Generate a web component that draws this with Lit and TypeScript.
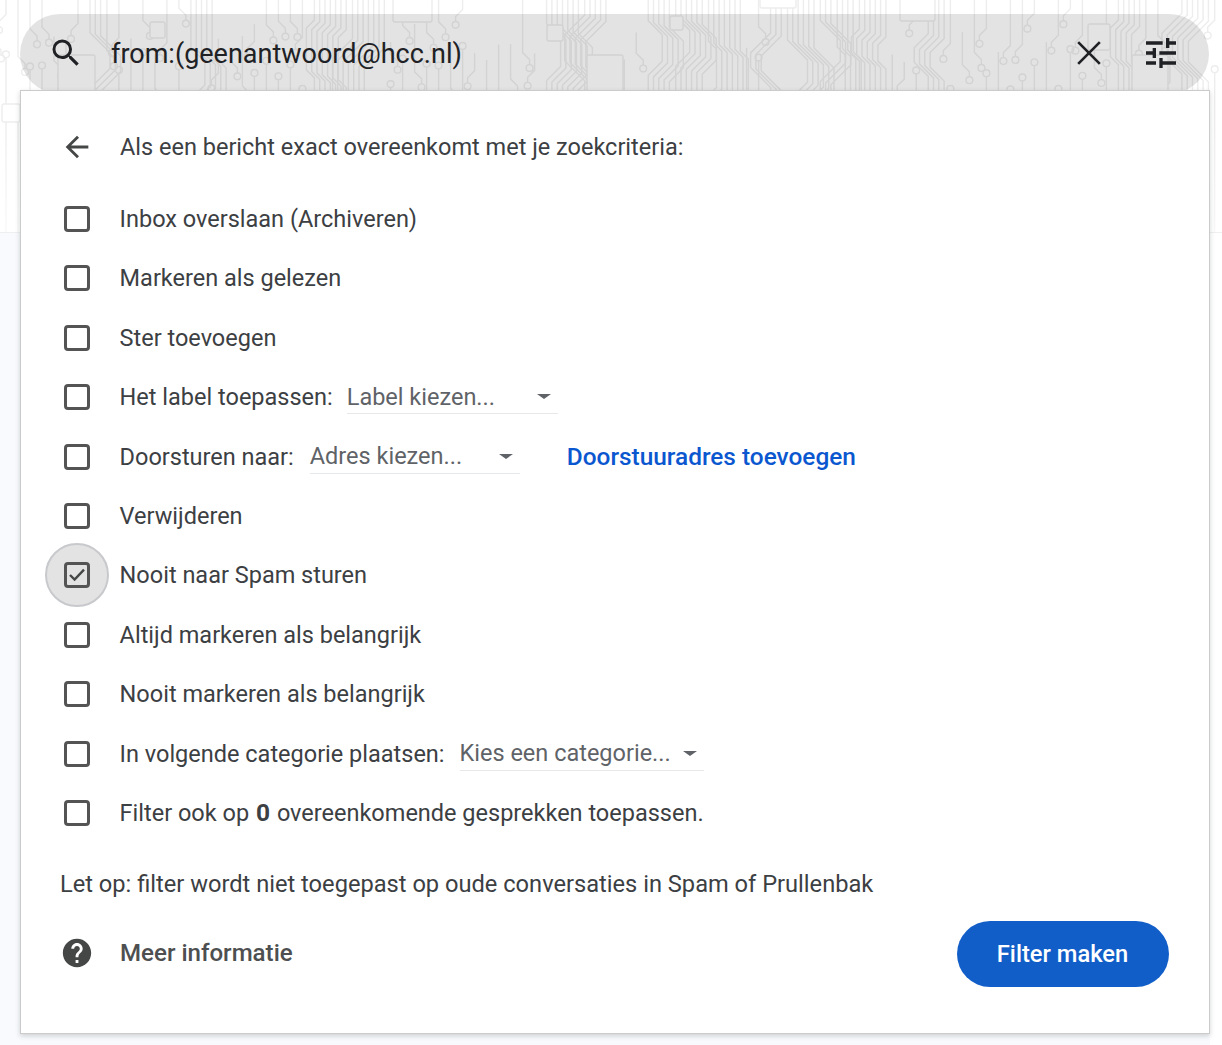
import { html, css, svg, LitElement } from "lit";
import { customElement } from "lit/decorators.js";

type Row = { label: string; checked?: boolean };

// seeded so the circuit background stays the same on every load
function rng(seed: number) {
  let s = seed;
  return () => {
    s = (s * 16807) % 2147483647;
    return s / 2147483647;
  };
}

const chips = [
  [58, 55, 37, 40],
  [150, 22, 15, 16],
  [393, -4, 39, 26],
  [547, 25, 16, 16],
  [587, 55, 36, 40],
  [670, 16, 13, 14],
  [760, -4, 36, 12],
  [900, -4, 35, 25],
  [1088, 24, 22, 26],
  [1132, 55, 36, 40],
  [2, 104, 18, 18],
];

function circuit() {
  const r = rng(4711);
  const out = [];
  const gap = 5.3;
  let x = -6;
  while (x < 1222) {
    if (r() > 0.32) {
      // bundle of parallel traces sharing one bend
      const n = 3 + Math.floor(r() * 5);
      const bend = (r() > 0.5 ? 1 : -1) * (8 + Math.floor(r() * 3) * 6);
      const bendY = 10 + r() * 50;
      const second = bendY + Math.abs(bend) + 14 + r() * 30;
      for (let i = 0; i < n; i++) {
        const lx = x + i * gap;
        const shift = i * 1.6;
        out.push(
          svg`<path d="M${lx} -4V${bendY + shift}L${lx + bend} ${bendY + shift + Math.abs(bend)}V${second + shift}L${lx} ${second + shift + Math.abs(bend)}V236" />`
        );
      }
      x += n * gap + 1;
    } else {
      // single traces that stop in a round pad
      const n = 2 + Math.floor(r() * 3);
      for (let i = 0; i < n; i++) {
        const lx = x + i * 12;
        const from = r() > 0.5 ? -4 : 22 + r() * 40;
        const to = from + 24 + r() * 50;
        const bend = (r() > 0.5 ? 1 : -1) * 7;
        out.push(svg`<path d="M${lx} ${from}V${to - 12}L${lx + bend} ${to - 5}V${to}" />`);
        out.push(svg`<circle cx=${lx + bend} cy=${to + 3.4} r="3.4" />`);
        const y2 = to + 14 + r() * 30;
        out.push(svg`<path d="M${lx} ${y2 + 7}V236" />`);
        out.push(svg`<circle cx=${lx} cy=${y2 + 3.6} r="3.4" />`);
      }
      x += n * 12;
    }
  }
  for (const [cx, cy, w, h] of chips) {
    out.push(svg`<rect x=${cx} y=${cy} width=${w} height=${h} rx="2" fill="#fff" />`);
  }
  return out;
}

const rows: Row[] = [
  { label: "Inbox overslaan (Archiveren)" },
  { label: "Markeren als gelezen" },
  { label: "Ster toevoegen" },
  { label: "Het label toepassen:" },
  { label: "Doorsturen naar:" },
  { label: "Verwijderen" },
  { label: "Nooit naar Spam sturen", checked: true },
  { label: "Altijd markeren als belangrijk" },
  { label: "Nooit markeren als belangrijk" },
  { label: "In volgende categorie plaatsen:" },
];

@customElement("app-root")
export class AppRoot extends LitElement {
  static styles = css`
    :host {
      display: block;
      position: relative;
      height: 1045px;
      overflow: hidden;
      background: linear-gradient(90deg, #f8fafd 1210px, #fff 1210px);
      font-family: Roboto, "Liberation Sans", sans-serif;
      color: #3c4043;
    }
    .circuit-wrap {
      position: absolute;
      left: 0;
      top: 0;
      width: 1222px;
      height: 232px;
      background: #fff;
      border-bottom: 1px solid #efefef;
    }
    .circuit {
      display: block;
      width: 1222px;
      height: 232px;
      -webkit-mask-image: linear-gradient(#000 50%, rgba(0, 0, 0, 0.35));
      mask-image: linear-gradient(#000 50%, rgba(0, 0, 0, 0.35));
    }
    .page {
      position: relative;
      padding: 14px 12.5px 0 20px;
    }
    .search {
      height: 80px;
      margin-right: 1px;
      border-radius: 40px;
      background: rgba(0, 0, 0, 0.11);
      display: flex;
      align-items: center;
      padding: 0 28px 2px 28px;
      box-sizing: border-box;
      color: #202124;
    }
    .query {
      flex: 1;
      font-size: 27px;
      margin-left: 27px;
      margin-top: 1px;
    }
    .search svg {
      display: block;
      fill: #202124;
    }
    .search .close {
      margin-right: 32px;
      fill: none;
      stroke: #202124;
      stroke-width: 1.6;
    }
    .panel {
      box-sizing: border-box;
      height: 944px;
      margin-top: -4px;
      position: relative;
      background: #fff;
      border: 1px solid #cbcbcb;
      box-shadow: 0 2px 5px rgba(60, 64, 67, 0.22);
      padding: 28px 39px 0 39px;
    }
    .head,
    .row,
    .more {
      display: flex;
      align-items: center;
    }
    .head {
      height: 56px;
      font-size: 23.5px;
    }
    .head svg {
      width: 34px;
      height: 34px;
      fill: #444746;
      margin-right: 26px;
      flex: none;
    }
    .rows {
      padding-top: 14.4px;
    }
    .row {
      height: 59.4px;
      font-size: 23.5px;
    }
    .box {
      position: relative;
      flex: none;
      width: 26px;
      height: 26px;
      box-sizing: border-box;
      margin: 0 29.6px 0 4px;
      border: 3px solid #545454;
      border-radius: 4px;
    }
    .box svg {
      position: absolute;
      left: 0;
      top: 0;
      width: 20px;
      height: 20px;
      fill: none;
      stroke: #444746;
      stroke-width: 2.4;
      z-index: 1;
    }
    .halo {
      position: absolute;
      left: -22px;
      top: -22px;
      width: 64px;
      height: 64px;
      box-sizing: border-box;
      border-radius: 50%;
      background: #e3e3e3;
      border: 2px solid #c8c9cc;
    }
    .frame {
      position: absolute;
      inset: -3px;
      border: 3px solid #545454;
      border-radius: 4px;
      z-index: 1;
    }
    .select {
      display: flex;
      align-items: center;
      justify-content: space-between;
      box-sizing: border-box;
      height: 34px;
      margin-left: 14px;
      border-bottom: 1px solid #e6e8ec;
      color: #5f6368;
      padding-right: 7px;
    }
    .select::after {
      content: "";
      border-style: solid;
      border-width: 5.5px 7px 0 7px;
      border-color: #5f6368 transparent transparent transparent;
    }
    .w1 {
      width: 211px;
    }
    .w2 {
      width: 210px;
      margin-left: 16px;
    }
    .w3 {
      width: 244px;
      margin-left: 15px;
    }
    .forward {
      margin-left: 47px;
      font-size: 24.4px;
      color: #0b57d0;
      font-weight: 500;
    }
    .note {
      font-size: 23.65px;
      margin: 12.6px 0 0;
      line-height: 59px;
    }
    .foot {
      display: flex;
      align-items: center;
      justify-content: space-between;
      padding-top: 7px;
    }
    .more {
      padding-bottom: 2px;
      font-size: 24.1px;
      font-weight: 500;
      color: #4d4f50;
    }
    .more svg {
      display: block;
      width: 34px;
      height: 34px;
      fill: #444746;
      margin-right: 26px;
    }
    button {
      width: 212px;
      height: 66px;
      margin-right: 1px;
      border: 0;
      border-radius: 33px;
      background: #115ec9;
      color: #fff;
      font: 500 23.7px Roboto, "Liberation Sans", sans-serif;
    }
    b {
      font-weight: 700;
      font-size: 24.5px;
      margin: 0 0.28em;
    }
  `;

  private extra(i: number) {
    if (i === 3) return html`<div class="select w1">Label kiezen...</div>`;
    if (i === 4)
      return html`<div class="select w2">Adres kiezen...</div>
        <span class="forward">Doorstuuradres toevoegen</span>`;
    if (i === 9) return html`<div class="select w3">Kies een categorie...</div>`;
    return "";
  }

  private box(checked?: boolean) {
    if (!checked) return html`<div class="box"></div>`;
    return html`<div class="box">
      <div class="halo"></div>
      <div class="frame"></div>
      <svg viewBox="0 0 20 20"><path d="M3 10l4.6 4.6L17 4.6" /></svg>
    </div>`;
  }

  render() {
    return html`
      <div class="circuit-wrap">
        <svg class="circuit" viewBox="0 0 1222 232" fill="none" stroke="#ededed" stroke-width="1.4">
          ${circuit()}
        </svg>
      </div>
      <div class="page">
        <div class="search">
          <svg width="36" height="36" viewBox="0 0 24 24">
            <path d="M15.5 14h-.79l-.28-.27A6.47 6.47 0 0 0 16 9.5 6.5 6.5 0 1 0 9.5 16c1.61 0 3.09-.59 4.23-1.57l.27.28v.79l5 4.99L20.49 19l-4.99-5zm-6 0C7.01 14 5 11.99 5 9.5S7.01 5 9.5 5 14 7.01 14 9.5 11.99 14 9.5 14z" />
          </svg>
          <div class="query">from:(geenantwoord@hcc.nl)</div>
          <svg class="close" width="40" height="40" viewBox="0 0 24 24">
            <path d="M5.5 5.5l13 13M18.5 5.5l-13 13" />
          </svg>
          <svg width="40" height="40" viewBox="0 0 24 24">
            <path d="M3 17v2h6v-2H3zM3 5v2h10V5H3zm10 16v-2h8v-2h-8v-2h-2v6h2zM7 9v2H3v2h4v2h2V9H7zm14 4v-2H11v2h10zm-6-4h2V7h4V5h-4V3h-2v6z" />
          </svg>
        </div>
        <div class="panel">
          <div class="head">
            <svg viewBox="0 0 24 24">
              <path d="M20 11H7.83l5.59-5.59L12 4l-8 8 8 8 1.41-1.41L7.83 13H20v-2z" />
            </svg>
            Als een bericht exact overeenkomt met je zoekcriteria:
          </div>
          <div class="rows">
            ${rows.map(
              (row, i) => html`<div class="row">
                ${this.box(row.checked)}<span>${row.label}</span>${this.extra(i)}
              </div>`
            )}
            <div class="row">
              ${this.box()}<span>Filter ook op<b>0</b>overeenkomende gesprekken toepassen.</span>
            </div>
          </div>
          <p class="note">Let op: filter wordt niet toegepast op oude conversaties in Spam of Prullenbak</p>
          <div class="foot">
            <div class="more">
              <svg viewBox="0 0 24 24">
                <path d="M12 2C6.48 2 2 6.48 2 12s4.48 10 10 10 10-4.48 10-10S17.52 2 12 2zm1 17h-2v-2h2v2zm2.07-7.75-.9.92C13.45 12.9 13 13.5 13 15h-2v-.5c0-1.1.45-2.1 1.17-2.83l1.24-1.26c.37-.36.59-.86.59-1.41 0-1.1-.9-2-2-2s-2 .9-2 2H8c0-2.21 1.79-4 4-4s4 1.79 4 4c0 .88-.36 1.68-.93 2.25z" />
              </svg>
              Meer informatie
            </div>
            <button>Filter maken</button>
          </div>
        </div>
      </div>
    `;
  }
}
